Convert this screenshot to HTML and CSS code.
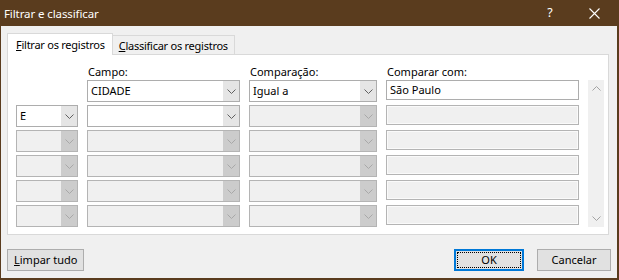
FILE: index.html
```html
<!DOCTYPE html>
<html lang="pt-BR">
<head>
<meta charset="utf-8">
<title>Filtrar e classificar</title>
<link rel="stylesheet" href="styles.css">
</head>
<body>
<div class="window">
  <div class="titlebar">
    <span class="title">Filtrar e classificar</span>
    <div class="caption-btns">
      <span class="help">?</span>
      <span class="close"><svg width="11" height="11" viewBox="0 0 11 11"><path d="M0.5 0.5 L10.5 10.5 M10.5 0.5 L0.5 10.5" stroke="#fff" stroke-width="1.1" fill="none"/></svg></span>
    </div>
  </div>
  <div class="client">
    <div class="tabs">
      <div class="tab active"><u>F</u>iltrar os registros</div>
      <div class="tab"><u>C</u>lassificar os registros</div>
    </div>
    <div class="panel">
      <div class="grid">
        <div class="lbl c2">Campo:</div>
        <div class="lbl c3">Comparação:</div>
        <div class="lbl c4">Comparar com:</div>

        <div class="combo c2"><span class="val">CIDADE</span><span class="btn"><svg width="9" height="5" viewBox="0 0 9 5"><path d="M0.5 0.5 L4.5 4.5 L8.5 0.5" stroke="#606060" fill="none"/></svg></span></div>
        <div class="combo c3"><span class="val">Igual a</span><span class="btn"><svg width="9" height="5" viewBox="0 0 9 5"><path d="M0.5 0.5 L4.5 4.5 L8.5 0.5" stroke="#606060" fill="none"/></svg></span></div>
        <div class="text c4">São Paulo</div>

        <div class="combo c1"><span class="val">E</span><span class="btn"><svg width="9" height="5" viewBox="0 0 9 5"><path d="M0.5 0.5 L4.5 4.5 L8.5 0.5" stroke="#606060" fill="none"/></svg></span></div>
        <div class="combo c2"><span class="val"></span><span class="btn"><svg width="9" height="5" viewBox="0 0 9 5"><path d="M0.5 0.5 L4.5 4.5 L8.5 0.5" stroke="#606060" fill="none"/></svg></span></div>
        <div class="combo c3 off"><span class="val"></span><span class="btn"><svg width="9" height="5" viewBox="0 0 9 5"><path d="M0.5 0.5 L4.5 4.5 L8.5 0.5" stroke="#a8a8a8" fill="none"/></svg></span></div>
        <div class="text c4 off"></div>

        <div class="combo c1 off"><span class="val"></span><span class="btn"><svg width="9" height="5" viewBox="0 0 9 5"><path d="M0.5 0.5 L4.5 4.5 L8.5 0.5" stroke="#a8a8a8" fill="none"/></svg></span></div>
        <div class="combo c2 off"><span class="val"></span><span class="btn"><svg width="9" height="5" viewBox="0 0 9 5"><path d="M0.5 0.5 L4.5 4.5 L8.5 0.5" stroke="#a8a8a8" fill="none"/></svg></span></div>
        <div class="combo c3 off"><span class="val"></span><span class="btn"><svg width="9" height="5" viewBox="0 0 9 5"><path d="M0.5 0.5 L4.5 4.5 L8.5 0.5" stroke="#a8a8a8" fill="none"/></svg></span></div>
        <div class="text c4 off"></div>

        <div class="combo c1 off"><span class="val"></span><span class="btn"><svg width="9" height="5" viewBox="0 0 9 5"><path d="M0.5 0.5 L4.5 4.5 L8.5 0.5" stroke="#a8a8a8" fill="none"/></svg></span></div>
        <div class="combo c2 off"><span class="val"></span><span class="btn"><svg width="9" height="5" viewBox="0 0 9 5"><path d="M0.5 0.5 L4.5 4.5 L8.5 0.5" stroke="#a8a8a8" fill="none"/></svg></span></div>
        <div class="combo c3 off"><span class="val"></span><span class="btn"><svg width="9" height="5" viewBox="0 0 9 5"><path d="M0.5 0.5 L4.5 4.5 L8.5 0.5" stroke="#a8a8a8" fill="none"/></svg></span></div>
        <div class="text c4 off"></div>

        <div class="combo c1 off"><span class="val"></span><span class="btn"><svg width="9" height="5" viewBox="0 0 9 5"><path d="M0.5 0.5 L4.5 4.5 L8.5 0.5" stroke="#a8a8a8" fill="none"/></svg></span></div>
        <div class="combo c2 off"><span class="val"></span><span class="btn"><svg width="9" height="5" viewBox="0 0 9 5"><path d="M0.5 0.5 L4.5 4.5 L8.5 0.5" stroke="#a8a8a8" fill="none"/></svg></span></div>
        <div class="combo c3 off"><span class="val"></span><span class="btn"><svg width="9" height="5" viewBox="0 0 9 5"><path d="M0.5 0.5 L4.5 4.5 L8.5 0.5" stroke="#a8a8a8" fill="none"/></svg></span></div>
        <div class="text c4 off"></div>

        <div class="combo c1 off"><span class="val"></span><span class="btn"><svg width="9" height="5" viewBox="0 0 9 5"><path d="M0.5 0.5 L4.5 4.5 L8.5 0.5" stroke="#a8a8a8" fill="none"/></svg></span></div>
        <div class="combo c2 off"><span class="val"></span><span class="btn"><svg width="9" height="5" viewBox="0 0 9 5"><path d="M0.5 0.5 L4.5 4.5 L8.5 0.5" stroke="#a8a8a8" fill="none"/></svg></span></div>
        <div class="combo c3 off"><span class="val"></span><span class="btn"><svg width="9" height="5" viewBox="0 0 9 5"><path d="M0.5 0.5 L4.5 4.5 L8.5 0.5" stroke="#a8a8a8" fill="none"/></svg></span></div>
        <div class="text c4 off"></div>

        <div class="scroll">
          <svg width="9" height="5" viewBox="0 0 9 5"><path d="M0.5 4.5 L4.5 0.5 L8.5 4.5" stroke="#a3a3a3" fill="none"/></svg>
          <svg width="9" height="5" viewBox="0 0 9 5"><path d="M0.5 0.5 L4.5 4.5 L8.5 0.5" stroke="#a3a3a3" fill="none"/></svg>
        </div>
      </div>
    </div>
    <div class="buttons">
      <div class="button"><u>L</u>impar tudo</div>
      <div class="right">
        <div class="button default"><span class="focus">OK</span></div>
        <div class="button">Cancelar</div>
      </div>
    </div>
  </div>
</div>
</body>
</html>
```
FILE: styles.css
```css
* { box-sizing: border-box; }
html, body { margin: 0; padding: 0; }
body {
  font-family: "Noto Sans", "Liberation Sans", sans-serif;
  font-size: 11px;
  color: #000;
  background: #f0f0f0;
}
.window {
  width: 619px;
  height: 280px;
  background: #f0f0f0;
  border-left: 1px solid #5a3c1e;
  border-right: 2px solid #5a3c1e;
  border-bottom: 2px solid #5a3c1e;
  display: flex;
  flex-direction: column;
}
.titlebar {
  height: 26px;
  background: #5a3c1e;
  color: #fff;
  display: flex;
  align-items: center;
  justify-content: space-between;
  padding-left: 3px;
}
.title { font-size: 11.5px; letter-spacing: -0.1px; }
.caption-btns { display: flex; align-items: center; height: 100%; }
.help {
  width: 46px;
  text-align: center;
  font-size: 12.5px;
  margin-top: -1px;
  padding-left: 4px;
}
.close {
  width: 46px;
  display: flex;
  justify-content: center;
  align-items: center;
}
.client {
  flex: 1;
  padding: 7px 8px 0 6px;
  display: flex;
  flex-direction: column;
}
.tabs {
  display: flex;
  align-items: flex-start;
  height: 22px;
  position: relative;
  z-index: 1;
  margin-bottom: -1px;
  letter-spacing: -0.25px;
}
.tab {
  height: 19px;
  margin-top: 2px;
  padding: 0 6px 0 6px;
  line-height: 19px;
  background: #f0f0f0;
  border: 1px solid #d9d9d9;
  border-bottom: none;
  border-left: none;
  white-space: nowrap;
}
.tab.active {
  height: 22px;
  margin-top: 0;
  background: #fff;
  border-left: 1px solid #d9d9d9;
  line-height: 22px;
  padding: 0 7px 0 8px;
}
.panel {
  height: 181px;
  background: #fff;
  border: 1px solid #d9d9d9;
  padding: 8px 0 0 8px;
}
.grid {
  display: grid;
  grid-template-columns: 62px 153px 128px 193px 16px;
  grid-template-rows: 14px repeat(6, 22px);
  column-gap: 9px;
  row-gap: 3px;
}
.lbl {
  line-height: 18px;
  grid-row: 1;
  padding-left: 1px;
}
.c1 { grid-column: 1; }
.c2 { grid-column: 2; }
.c3 { grid-column: 3; }
.c4 { grid-column: 4; }
.combo {
  height: 22px;
  border: 1px solid #adadad;
  background: #fff;
  display: flex;
}
.combo .val {
  flex: 1;
  padding-left: 3px;
  line-height: 20px;
  white-space: nowrap;
}
.combo .btn {
  width: 16px;
  background: #e5e5e5;
  display: flex;
  align-items: center;
  justify-content: center;
}
.combo.off {
  background: #f0f0f0;
  border-color: #b4b4b4;
}
.combo.off .btn { background: #cccccc; }
.text {
  height: 20px;
  border: 1px solid #adadad;
  background: #fff;
  padding-left: 3px;
  line-height: 18px;
}
.text.off {
  background: #f0f0f0;
  border-color: #b4b4b4;
  box-shadow: inset 0 0 0 1px #fafafa;
}
.scroll {
  grid-column: 5;
  grid-row: 2 / 8;
  background: #f0f0f0;
  display: flex;
  flex-direction: column;
  justify-content: space-between;
  align-items: center;
  padding: 6px 0 6px;
}
.buttons {
  margin-top: 14px;
  margin-right: -2px;
  display: flex;
  justify-content: space-between;
  align-items: flex-start;
}
.right { display: flex; gap: 13px; }
.button {
  height: 22px;
  min-width: 73px;
  padding: 0 6px;
  border: 1px solid #adadad;
  background: #e1e1e1;
  text-align: center;
  line-height: 20px;
  white-space: nowrap;
}
.button.default {
  min-width: 70px;
  border: 2px solid #0078d7;
  padding: 1px;
  line-height: 16px;
}
.button.default .focus {
  display: block;
  height: 16px;
  border: 1px dotted #000;
  line-height: 14px;
}
.right .button:last-child { min-width: 74px; }
```
